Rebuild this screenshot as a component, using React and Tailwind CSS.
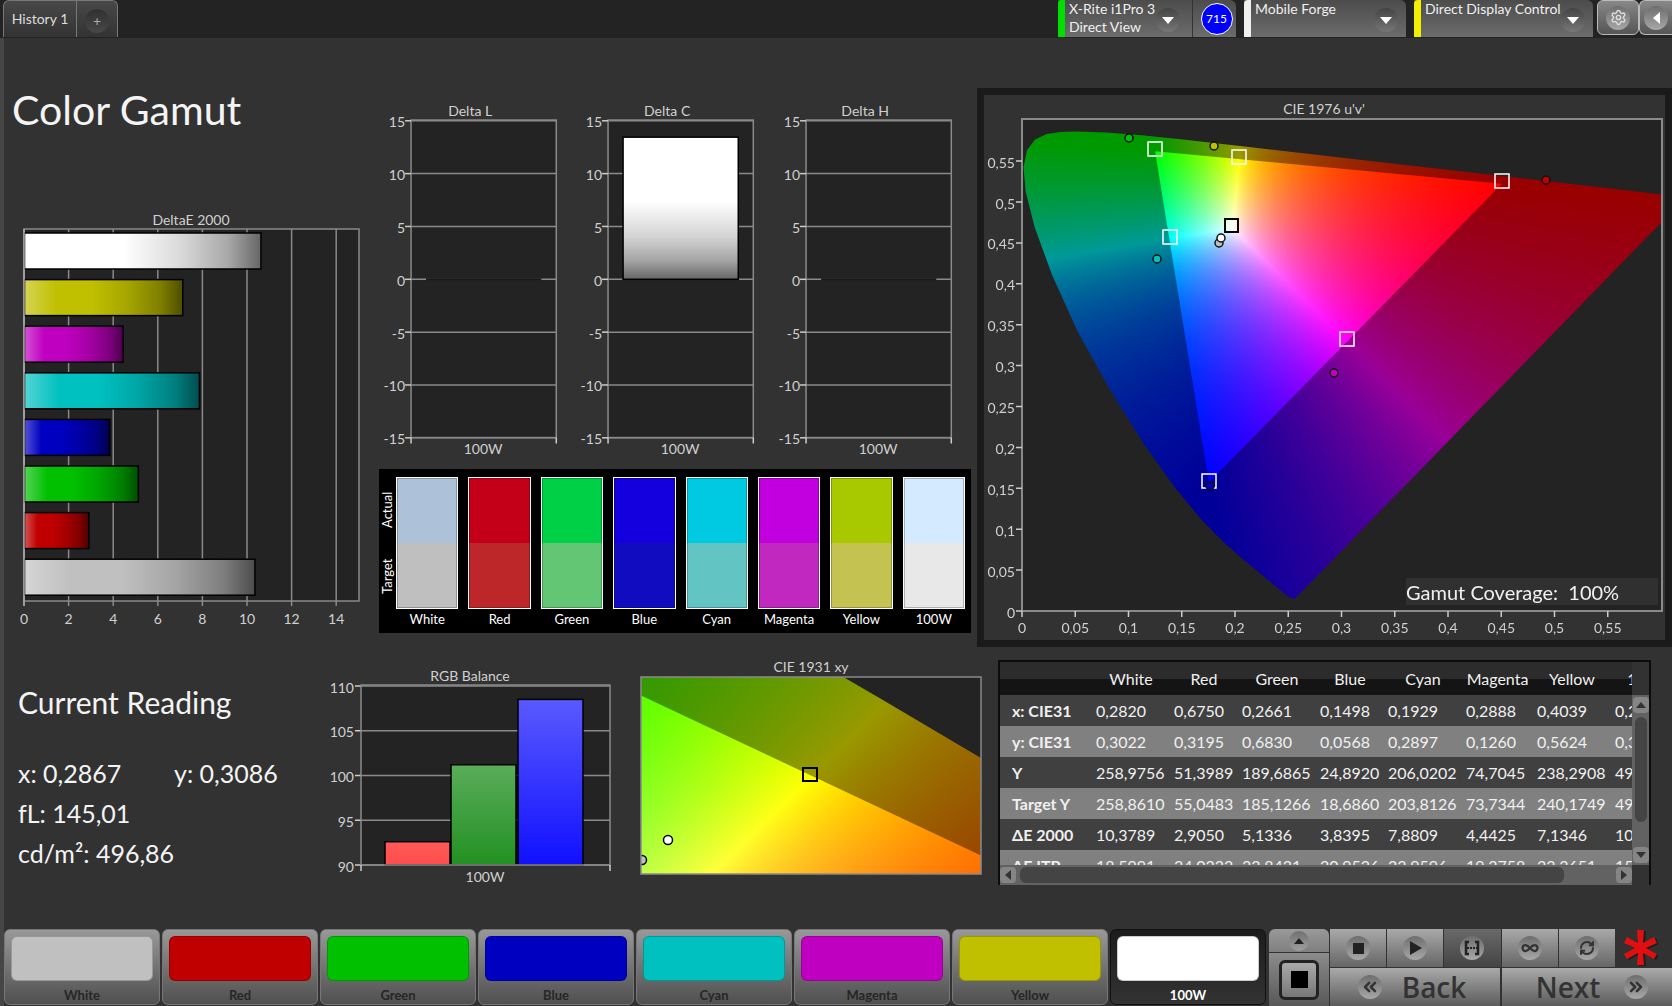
import React, { useLayoutEffect, useRef } from 'react';
import { Settings, RefreshCw, Infinity as Loop, ChevronsLeft, ChevronsRight } from 'lucide-react';

// spectral locus, CIE 1931 x/y
const LOCUS = [
	[0.1741, 0.005], [0.1733, 0.0048], [0.1714, 0.0051], [0.1689, 0.0069], [0.1644, 0.0109],
	[0.1566, 0.0177], [0.151, 0.0227], [0.144, 0.0297], [0.1355, 0.0399], [0.1241, 0.0578],
	[0.1096, 0.0868], [0.0913, 0.1327], [0.0687, 0.2007], [0.0454, 0.295], [0.0235, 0.4127],
	[0.0082, 0.5384], [0.0039, 0.6548], [0.0139, 0.7502], [0.0389, 0.812], [0.0743, 0.8338],
	[0.1142, 0.8262], [0.1547, 0.8059], [0.2296, 0.7543], [0.3016, 0.6923], [0.3731, 0.6245],
	[0.4441, 0.5547], [0.5125, 0.4866], [0.5752, 0.4242], [0.627, 0.3725], [0.6658, 0.334],
	[0.6915, 0.3083], [0.719, 0.2809], [0.7347, 0.2653],
];
const REC709 = [[0.64, 0.33], [0.3, 0.6], [0.15, 0.06]];

const xyToUv = ([x, y]) => {
	const d = -2 * x + 12 * y + 3;
	return [(4 * x) / d, (9 * y) / d];
};
const uvToXy = ([u, v]) => {
	const d = 6 * u - 16 * v + 12;
	return [(9 * u) / d, (4 * v) / d];
};
const same = (p) => p;

const xyToRgb = ([x, y]) => {
	const z = 1 - x - y;
	const rgb = [
		3.2406 * x - 1.5372 * y - 0.4986 * z,
		-0.9689 * x + 1.8758 * y + 0.0415 * z,
		0.0557 * x - 0.204 * y + 1.057 * z,
	].map((c) => Math.max(0, c));
	const max = Math.max(...rgb) || 1;
	return rgb.map((c) => (c / max) * 255);
};

// Paints the chromaticity field; everything outside the triangle is dimmed.
const GamutCanvas = ({ width, height, range, toXy, fromXy }) => {
	const ref = useRef(null);

	useLayoutEffect(() => {
		const ctx = ref.current.getContext('2d');
		const [x0, x1, y0, y1] = range;
		const image = ctx.createImageData(width, height);
		for (let j = 0; j < height; j++) {
			for (let i = 0; i < width; i++) {
				const p = [x0 + ((i + 0.5) / width) * (x1 - x0), y1 - ((j + 0.5) / height) * (y1 - y0)];
				const [r, g, b] = xyToRgb(toXy(p));
				const k = (j * width + i) * 4;
				image.data[k] = r;
				image.data[k + 1] = g;
				image.data[k + 2] = b;
				image.data[k + 3] = 255;
			}
		}
		ctx.globalCompositeOperation = 'source-over';
		ctx.putImageData(image, 0, 0);

		const shape = (points) => {
			const path = new Path2D();
			points.map(fromXy).forEach(([a, b]) => {
				path.lineTo(((a - x0) / (x1 - x0)) * width, ((y1 - b) / (y1 - y0)) * height);
			});
			path.closePath();
			return path;
		};
		const dim = new Path2D();
		dim.rect(-5000, -5000, 15000, 15000);
		dim.addPath(shape(REC709));
		ctx.fillStyle = 'rgba(0,0,0,0.4)';
		ctx.fill(dim, 'evenodd');
		ctx.globalCompositeOperation = 'destination-in';
		ctx.fillStyle = '#000';
		ctx.fill(shape(LOCUS));
	}, [width, height, range, toXy, fromXy]);

	return <canvas ref={ref} width={width} height={height} className="block" />;
};

const GRID = '#8a8a8a';
const PLOT = '#232323';

const T = ({ x, y, anchor = 'middle', children }) => (
	<text x={x} y={y} textAnchor={anchor} dominantBaseline="central" fill="#d0d0d0" className="text-sm">{children}</text>
);

const ERRORS = [
	{ name: 'White 100', color: '#ffffff', value: 10.65 },
	{ name: 'Yellow', color: '#c0c000', value: 7.13 },
	{ name: 'Magenta', color: '#c000c0', value: 4.44 },
	{ name: 'Cyan', color: '#00c0c0', value: 7.88 },
	{ name: 'Blue', color: '#0000c0', value: 3.84 },
	{ name: 'Green', color: '#00c000', value: 5.13 },
	{ name: 'Red', color: '#c00000', value: 2.9 },
	{ name: 'White', color: '#c0c0c0', value: 10.38 },
];

const DeltaEChart = () => (
	<svg viewBox="0 0 373 422" className="w-full h-auto block">
		<defs>
			<linearGradient id="gloss">
				<stop offset="0" stopColor="#fff" stopOpacity=".33" />
				<stop offset=".2" stopColor="#fff" stopOpacity="0" />
				<stop offset=".42" stopColor="#000" stopOpacity="0" />
				<stop offset=".65" stopColor="#000" stopOpacity=".14" />
				<stop offset=".86" stopColor="#000" stopOpacity=".34" />
				<stop offset="1" stopColor="#000" stopOpacity=".6" />
			</linearGradient>
		</defs>
		<T x={187} y={10}>DeltaE 2000</T>
		<rect x="20" y="20" width="335" height="372" fill={PLOT} stroke={GRID} strokeWidth="1.5" />
		{[0, 2, 4, 6, 8, 10, 12, 14].map((v) => (
			<g key={v}>
				<path d={`M${20 + v * 22.3} 20V397`} stroke={GRID} strokeWidth="1.5" />
				<T x={20 + v * 22.3} y={409}>{v}</T>
			</g>
		))}
		{ERRORS.map((e, i) => (
			<g key={e.name}>
				<rect x="20.5" y={24 + i * 46.6} width={e.value * 22.2} height="36" fill={e.color} />
				<rect x="20.5" y={24 + i * 46.6} width={e.value * 22.2} height="36" fill="url(#gloss)" stroke="#000" strokeWidth="1.5" />
			</g>
		))}
		<path d="M20 20V397" stroke="#aaa" strokeWidth="1.5" />
	</svg>
);

const DeltaChart = ({ title, value }) => (
	<svg viewBox="0 0 197 360" className="w-full h-auto block">
		<defs>
			<linearGradient id="fade" x2="0" y2="1">
				<stop offset=".45" stopColor="#fff" />
				<stop offset=".7" stopColor="#d4d4d4" />
				<stop offset=".87" stopColor="#a4a4a4" />
				<stop offset="1" stopColor="#666" />
			</linearGradient>
		</defs>
		<T x={91} y={11}>{title}</T>
		<rect x="32" y="21" width="145" height="317" fill={PLOT} stroke={GRID} strokeWidth="1.5" />
		{[15, 10, 5, 0, -5, -10, -15].map((v) => (
			<g key={v}>
				<path d={`M32 ${180 - v * 10.55}H177`} stroke={GRID} strokeWidth="1.5" />
				<path d={`M26 ${180 - v * 10.55}H32`} stroke="#ccc" strokeWidth="1.5" />
				<T x={26} y={181 - v * 10.55} anchor="end">{v}</T>
			</g>
		))}
		<path d="M32 338V344M177 338V344" stroke="#ccc" strokeWidth="1.5" />
		{value ? (
			<rect x="47" y={180 - value * 10.55} width="115" height={value * 10.55} fill="url(#fade)" stroke="#000" strokeWidth="1.5" />
		) : (
			<path d="M47 180H162" stroke="#1a1a1a" strokeWidth="2" />
		)}
		<T x={104} y={349}>100W</T>
	</svg>
);

const SWATCHES = [
	['White', '#adc1d8', '#bfbfbf'],
	['Red', '#c40019', '#be272a'],
	['Green', '#00d046', '#63c674'],
	['Blue', '#1400de', '#120cc0'],
	['Cyan', '#00cae2', '#62c5c4'],
	['Magenta', '#c200df', '#c028c0'],
	['Yellow', '#a8c800', '#c4c352'],
	['100W', '#d4eaff', '#e8e8e8'],
];

const SwatchPanel = () => (
	<section className="flex bg-black pt-2 pb-1 pr-1.5 text-[13px] leading-5 text-white">
		<div className="w-[17px] h-[132px] flex flex-col-reverse leading-[17px]">
			<span className="flex-1 text-center [writing-mode:vertical-rl] rotate-180">Target</span>
			<span className="flex-1 text-center [writing-mode:vertical-rl] rotate-180">Actual</span>
		</div>
		<div className="flex-1 grid grid-cols-8 gap-[10px]">
			{SWATCHES.map(([name, actual, target]) => (
				<div key={name} className="text-center">
					<div className="h-[132px] border border-white">
						<div className="h-full flex flex-col relative">
							<div className="flex-1" style={{ background: actual }} />
							<div className="flex-1" style={{ background: target }} />
							<div className="absolute inset-0 border border-black/25" />
						</div>
					</div>
					{name}
				</div>
			))}
		</div>
	</section>
);

const UV_RANGE = [0, 0.601, 0.001, 0.602];
const XY_RANGE = [0.3555, 0.4825, 0.4435, 0.5675];

const TARGETS = [[171, 54], [255, 62], [518, 86], [186, 142], [363, 244], [225, 386]];
const READINGS = [
	[145, 43, '#00c000'], [230, 51, '#c0c000'], [562, 85, '#c00000'], [173, 164, '#00c0c0'],
	[350, 278, '#c000c0'], [226, 391, '#0000c0'], [235, 148, '#bfbfbf'], [237, 143, '#ffffff'],
];

const fmt = (n) => String(n).replace('.', ',');
const STEPS = [0, 0.05, 0.1, 0.15, 0.2, 0.25, 0.3, 0.35, 0.4, 0.45, 0.5, 0.55];

const Cie1976 = () => (
	<section className="border-7 border-[#1a1a1a]">
		<svg viewBox="0 0 681 545" className="w-full h-auto block">
			<T x={340} y={13}>CIE 1976 u'v'</T>
			<rect x="38" y="24" width="640" height="492" fill={PLOT} />
			<foreignObject x="38" y="24" width="640" height="492">
				<GamutCanvas width={640} height={492} range={UV_RANGE} toXy={uvToXy} fromXy={xyToUv} />
			</foreignObject>
			<rect x="38" y="24" width="640" height="492" fill="none" stroke={GRID} strokeWidth="2" />
			{STEPS.map((v) => (
				<g key={v}>
					<path d={`M32 ${516 - v * 818}H38M${38 + v * 1065} 516V522`} stroke="#ccc" strokeWidth="1.5" />
					<T x={31} y={517 - v * 818} anchor="end">{fmt(v)}</T>
					<T x={38 + v * 1065} y={532}>{fmt(v)}</T>
				</g>
			))}
			{TARGETS.map(([x, y]) => (
				<rect key={x} x={x - 7} y={y - 7} width="14" height="14" fill="none" stroke="#fff" strokeWidth="1.5" />
			))}
			<rect x="241" y="124" width="13" height="13" fill="none" stroke="#000" strokeWidth="2" />
			{READINGS.map(([x, y, color]) => (
				<circle key={color} cx={x} cy={y} r="4" fill={color} stroke="#111" strokeWidth="1.5" />
			))}
			<rect x="422" y="483" width="252" height="27" fill="#303030" />
			<text x="422" y="497" dominantBaseline="central" fill="#f0f0f0" xmlSpace="preserve" className="text-xl">{'Gamut Coverage:  100%'}</text>
		</svg>
	</section>
);

const Cie1931 = () => (
	<svg viewBox="0 0 362 234" className="w-full h-auto block">
		<clipPath id="xy"><rect x="9" y="22" width="340" height="197" /></clipPath>
		<T x={179} y={11}>CIE 1931 xy</T>
		<rect x="9" y="22" width="340" height="197" fill={PLOT} />
		<foreignObject x="9" y="22" width="340" height="197">
			<GamutCanvas width={340} height={197} range={XY_RANGE} toXy={same} fromXy={same} />
		</foreignObject>
		<g clipPath="url(#xy)" stroke="#000" strokeWidth="1.5">
			<circle cx="10" cy="205" r="4.5" fill="#bfbfbf" />
			<circle cx="36" cy="185" r="4.5" fill="#fff" />
			<rect x="171" y="113" width="14" height="13" fill="none" strokeWidth="2" />
		</g>
		<rect x="9" y="22" width="340" height="197" fill="none" stroke={GRID} strokeWidth="1.5" />
	</svg>
);

const BALANCE = [
	['red', 63, 92.6, '#ff5a5a', '#ff4c4c'],
	['green', 129, 101.2, '#5aad5a', '#229022'],
	['blue', 196, 108.5, '#5a5aff', '#1010ff'],
];

const RgbBalance = () => (
	<svg viewBox="0 0 310 234" className="w-full h-auto block">
		<T x={148} y={20}>RGB Balance</T>
		<rect x="39" y="30" width="249" height="180" fill={PLOT} />
		{[110, 105, 100, 95, 90].map((v) => (
			<g key={v}>
				<path d={`M39 ${210 - (v - 90) * 8.95}H288`} stroke={GRID} strokeWidth="1.5" />
				<path d={`M33 ${210 - (v - 90) * 8.95}H39`} stroke="#ccc" strokeWidth="1.5" />
				<T x={32} y={211 - (v - 90) * 8.95} anchor="end">{v}</T>
			</g>
		))}
		{BALANCE.map(([name, x, v, top, bottom]) => (
			<g key={name}>
				<linearGradient id={name} x2="0" y2="1">
					<stop stopColor={top} />
					<stop offset="1" stopColor={bottom} />
				</linearGradient>
				<rect x={x} y={210 - (v - 90) * 8.95} width="65" height={(v - 90) * 8.95} fill={`url(#${name})`} stroke="#000" strokeWidth="1.5" />
			</g>
		))}
		<rect x="39" y="30" width="249" height="180" fill="none" stroke={GRID} strokeWidth="1.5" />
		<path d="M39 210V216M288 210V216" stroke="#ccc" strokeWidth="1.5" />
		<T x={163} y={221}>100W</T>
	</svg>
);

const COLUMNS = ['White', 'Red', 'Green', 'Blue', 'Cyan', 'Magenta', 'Yellow', '100W'];
const ROWS = [
	['x: CIE31', '0,2820', '0,6750', '0,2661', '0,1498', '0,1929', '0,2888', '0,4039', '0,2867'],
	['y: CIE31', '0,3022', '0,3195', '0,6830', '0,0568', '0,2897', '0,1260', '0,5624', '0,3086'],
	['Y', '258,9756', '51,3989', '189,6865', '24,8920', '206,0202', '74,7045', '238,2908', '496,8600'],
	['Target Y', '258,8610', '55,0483', '185,1266', '18,6860', '203,8126', '73,7344', '240,1749', '496,8600'],
	['ΔE 2000', '10,3789', '2,9050', '5,1336', '3,8395', '7,8809', '4,4425', '7,1346', '10,6482'],
	['ΔE ITP', '18,5991', '34,0222', '32,8431', '20,9526', '23,9596', '19,2758', '33,3651', '15,2210'],
];

const ScrollButton = ({ label, points }) => (
	<button aria-label={label} className="size-4 shrink-0 rounded-sm bg-[#858585] flex items-center justify-center">
		<svg viewBox="0 0 10 10" className="size-2.5"><polygon points={points} fill="#333" /></svg>
	</button>
);

const DataTable = () => (
	<section className="mt-[5px] ml-1 mr-[21px] border-x-2 border-t-2 border-[#0c0c0c] grid grid-cols-[minmax(0,1fr)_17px]">
		<div className="h-[203px] overflow-hidden">
			<table className="w-[688px] table-fixed text-base leading-[31px] text-[#f0f0f0]">
				<colgroup>
					<col className="w-[92px]" />
					<col className="w-[78px]" />
					<col className="w-[68px]" />
					<col className="w-[78px]" />
					<col className="w-[68px]" />
					<col className="w-[78px]" />
					<col className="w-[71px]" />
					<col className="w-[78px]" />
					<col className="w-[77px]" />
				</colgroup>
				<thead>
					<tr className="h-[33px] bg-linear-to-b from-[#2c2c2c] from-50% to-[#141414] to-50%">
						<th />
						{COLUMNS.map((c) => <th key={c} className="font-normal p-0">{c}</th>)}
					</tr>
				</thead>
				<tbody>
					{ROWS.map(([label, ...cells]) => (
						<tr key={label} className="odd:bg-[#404040] even:bg-[#808080]">
							<th className="p-0 pl-3 text-left font-bold">{label}</th>
							{cells.map((c, i) => <td key={i} className="p-0 pl-1">{c}</td>)}
						</tr>
					))}
				</tbody>
			</table>
		</div>
		<div className="mt-[33px] flex flex-col items-center gap-1 bg-[#626262] py-0.5">
			<ScrollButton label="Scroll up" points="5,2 10,8 0,8" />
			<div className="w-3 h-[105px] rounded-md bg-[#444]" />
			<div className="flex-1" />
			<ScrollButton label="Scroll down" points="5,8 10,2 0,2" />
		</div>
		<div className="flex items-center gap-1 bg-[#626262] h-5">
			<ScrollButton label="Scroll left" points="2,5 8,0 8,10" />
			<div className="w-[86%] h-4 rounded-md bg-[#444]" />
			<div className="flex-1" />
			<ScrollButton label="Scroll right" points="8,5 2,0 2,10" />
		</div>
	</section>
);

const Knob = ({ className = '', children }) => (
	<span className={`size-6 shrink-0 rounded-full flex items-center justify-center bg-linear-to-b from-[#6e6e6e] to-[#a8a8a8] text-[#333] ${className}`}>{children}</span>
);

const DeviceMenu = ({ className, bar, lines }) => (
	<button className={`h-[37px] flex text-left overflow-hidden bg-linear-to-b from-[#4c4c4c] to-[#6c6c6c] ${className}`}>
		<span className={`w-[7px] h-full shrink-0 rounded-tl-sm ${bar}`} />
		<span className="flex-1 pl-1 text-sm leading-[18px] text-[#f0f0f0] whitespace-nowrap">
			{lines.map((l) => <span key={l} className="block">{l}</span>)}
		</span>
		<span className="mt-2 size-6 shrink-0 rounded-full flex items-center justify-center bg-linear-to-b from-[#444] to-[#777]">
			<svg viewBox="0 0 12 7" className="w-3 h-[7px]"><polygon points="0,0 12,0 6,7" fill="#fff" /></svg>
		</span>
	</button>
);

const Header = () => (
	<header className="h-[38px] flex justify-between bg-[#232323] pl-[3px]">
		<nav className="h-[37px] flex rounded-t-md border border-b-0 border-[#787878] bg-linear-to-b from-[#484848] to-[#333] text-[#ddd] text-sm">
			<button className="w-[73px] border-r border-[#787878]">History 1</button>
			<button aria-label="Add tab" className="w-10 flex items-center justify-center">
				<span className="size-6 mt-1 rounded-full bg-linear-to-b from-[#303030] to-[#484848] text-[#aaa] leading-6">+</span>
			</button>
		</nav>
		<div className="flex">
			<DeviceMenu className="w-[134px] pr-3" bar="bg-[#00e000]" lines={['X-Rite i1Pro 3', 'Direct View']} />
			<div className="h-[37px] w-11 mr-2 pl-1 flex items-center justify-center border-l border-[#333] rounded-tr-md bg-linear-to-b from-[#4c4c4c] to-[#6c6c6c]">
				<span className="size-8 rounded-full border border-white bg-[#0000ff] text-white text-xs flex items-center justify-center">715</span>
			</div>
			<DeviceMenu className="w-[162px] mr-2 pr-2 rounded-tr-md" bar="bg-[#f0f0f0]" lines={['Mobile Forge']} />
			<DeviceMenu className="w-[179px] mr-1 pr-2 rounded-tr-md" bar="bg-[#f0f000]" lines={['Direct Display Control']} />
			<button aria-label="Settings" className="w-[42px] h-[35px] rounded-md border border-[#bbb] bg-linear-to-b from-[#888] to-[#555] flex items-center justify-center">
				<Knob className="text-[#ddd]"><Settings size={17} /></Knob>
			</button>
			<button aria-label="Collapse" className="w-[33px] h-[35px] rounded-l-md border border-r-0 border-[#bbb] bg-linear-to-b from-[#888] to-[#555] flex items-center justify-center">
				<Knob><svg viewBox="0 0 7 12" className="w-[7px] h-3"><polygon points="7,0 7,12 0,6" fill="#fff" /></svg></Knob>
			</button>
		</div>
	</header>
);

const Reading = () => (
	<section className="pl-3.5 pt-6 text-[#f4f4f4]">
		<h2 className="text-[30px] leading-[46px]">Current Reading</h2>
		<div className="pt-7 text-[25px] leading-10">
			<div className="flex">
				<span className="w-[156px]">x: 0,2867</span>
				<span>y: 0,3086</span>
			</div>
			<div>fL: 145,01</div>
			<div>cd/m²: 496,86</div>
		</div>
	</section>
);

const PATCHES = [
	['White', 'bg-[#c0c0c0]'],
	['Red', 'bg-[#c00000]'],
	['Green', 'bg-[#00c000]'],
	['Blue', 'bg-[#0000c0]'],
	['Cyan', 'bg-[#00c0c0]'],
	['Magenta', 'bg-[#c000c0]'],
	['Yellow', 'bg-[#c0c000]'],
	['100W', 'bg-white'],
];

const transport = 'h-[38px] flex items-center justify-center bg-linear-to-b';

const Footer = () => (
	<footer className="mt-auto grid grid-cols-[minmax(0,1264fr)_minmax(0,62fr)_minmax(0,342fr)] h-[77px]">
		<div className="grid grid-cols-8 gap-0.5 pr-0.5">
			{PATCHES.map(([name, color]) => {
				const active = name === '100W';
				return (
					<button key={name} className={`h-[76px] rounded-md border px-1.5 pt-1.5 flex flex-col text-[13px] font-bold ${active ? 'border-[#111] bg-linear-to-b from-[#1c1c1c] to-[#333] text-white' : 'border-[#777] bg-linear-to-b from-[#999] to-[#505050] text-[#262626]'}`}>
						<span className={`h-[45px] w-full shrink-0 rounded-md border border-black/20 ${color}`} />
						<span className="w-full leading-7">{name}</span>
					</button>
				);
			})}
		</div>
		<div className="flex flex-col gap-px px-px">
			<button aria-label="More patches" className="h-[23px] rounded-t-md bg-linear-to-b from-[#999] to-[#808080] flex items-center justify-center">
				<span className="size-5 rounded-full bg-linear-to-b from-[#707070] to-[#a0a0a0] flex items-center justify-center">
					<svg viewBox="0 0 10 6" className="w-2.5 h-1.5"><polygon points="5,0 10,6 0,6" fill="#222" /></svg>
				</span>
			</button>
			<button aria-label="Pattern window" className="flex-1 bg-linear-to-b from-[#8c8c8c] to-[#585858] flex items-center justify-center">
				<span className="size-10 rounded-md border-3 border-[#222] bg-linear-to-b from-[#aaa] to-[#777] flex items-center justify-center">
					<span className="size-[17px] bg-black" />
				</span>
			</button>
		</div>
		<div className="flex flex-col gap-px">
			<div className="grid grid-cols-6 gap-px">
				<button aria-label="Stop" className={`${transport} from-[#aaa] to-[#666]`}><Knob><span className="size-[11px] bg-[#222]" /></Knob></button>
				<button aria-label="Play" className={`${transport} from-[#aaa] to-[#666]`}>
					<Knob><svg viewBox="0 0 12 14" className="w-3 h-3.5 ml-0.5"><polygon points="0,0 12,7 0,14" fill="#222" /></svg></Knob>
				</button>
				<button aria-label="Range" className={`${transport} from-[#6a6a6a] to-[#444]`}>
					<Knob className="from-[#4c4c4c] to-[#777]">
						<svg viewBox="0 0 18 16" className="w-[18px] h-4" fill="none" stroke="#222" strokeWidth="2.5">
							<path d="M6 2H3V14H6M12 2H15V14H12" />
							<path d="M4 8H14" strokeWidth="2" strokeDasharray="2 1" />
						</svg>
					</Knob>
				</button>
				<button aria-label="Loop" className={`${transport} from-[#aaa] to-[#666]`}><Knob><Loop size={18} strokeWidth={3} /></Knob></button>
				<button aria-label="Refresh" className={`${transport} from-[#aaa] to-[#666]`}><Knob><RefreshCw size={16} strokeWidth={3} /></Knob></button>
				<span className="flex items-center justify-center pr-1.5">
					<svg viewBox="0 0 34 38" className="w-[34px] h-[38px]">
						<path d="M15 2H22L21 15L32 9L35 15L24 20L35 26L32 31L21 25L22 37H15L16 25L5 31L2 26L13 20L2 15L5 9L16 15Z" fill="#111" opacity=".6" />
						<path d="M13 1H20L19 14L30 8L33 14L22 19L33 25L30 30L19 24L20 36H13L14 24L3 30L0 25L11 19L0 14L3 8L14 14Z" fill="#e01010" />
					</svg>
				</span>
			</div>
			<div className="grid grid-cols-2 gap-0.5 text-[28px] font-semibold leading-none text-[#333] font-['Open_Sans',sans-serif]">
				<button className={`${transport} from-[#aaa] to-[#5c5c5c] gap-5 pr-1.5`}><Knob><ChevronsLeft size={20} strokeWidth={3} /></Knob>Back</button>
				<button className={`${transport} from-[#aaa] to-[#5c5c5c] gap-6 pl-2.5`}>Next<Knob><ChevronsRight size={20} strokeWidth={3} /></Knob></button>
			</div>
		</div>
	</footer>
);

const App = () => (
	<div className="min-h-screen flex flex-col bg-[#323232] font-[Lato,'Noto_Sans',sans-serif]">
		<Header />
		<main className="flex-1 flex flex-col border-l-4 border-[#464646]">
			<div className="pt-[50px] grid grid-cols-[minmax(0,373fr)_minmax(0,600fr)_minmax(0,695fr)]">
				<div className="flex flex-col">
					<h1 className="pl-2 h-[121px] text-[41px] leading-[44px] text-[#f4f4f4]">Color Gamut</h1>
					<DeltaEChart />
				</div>
				<div className="pl-0.5 pr-1.5 pt-[11px] flex flex-col gap-[9px]">
					<div className="grid grid-cols-3">
						<DeltaChart title="Delta L" />
						<DeltaChart title="Delta C" value={13.45} />
						<DeltaChart title="Delta H" />
					</div>
					<SwatchPanel />
				</div>
				<Cie1976 />
			</div>
			<div className="pt-2 pb-4 grid grid-cols-[minmax(0,318fr)_minmax(0,310fr)_minmax(0,362fr)_minmax(0,678fr)] items-start">
				<Reading />
				<RgbBalance />
				<Cie1931 />
				<DataTable />
			</div>
			<Footer />
		</main>
	</div>
);

export default App;
